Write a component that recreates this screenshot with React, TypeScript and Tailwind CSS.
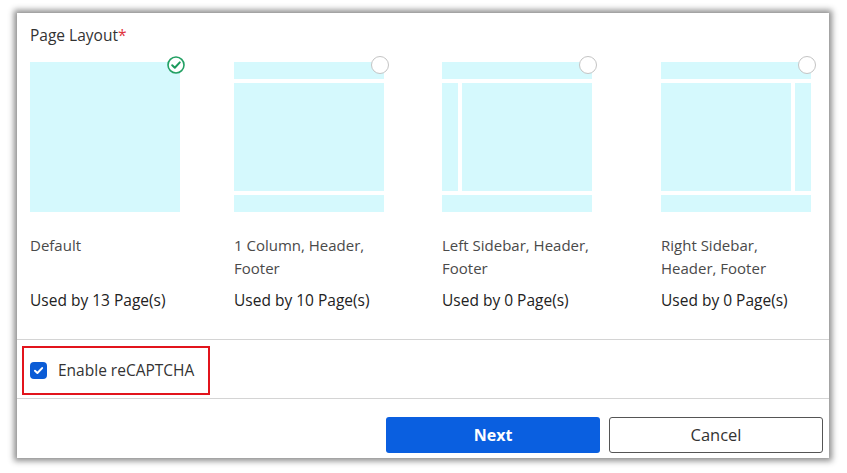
import React from "react";

type Layout = {
  name: string;
  kind: "default" | "column" | "left" | "right";
  used: number;
  selected?: boolean;
};

const layouts: Layout[] = [
  { name: "Default", kind: "default", used: 13, selected: true },
  { name: "1 Column, Header, Footer", kind: "column", used: 10 },
  { name: "Left Sidebar, Header, Footer", kind: "left", used: 0 },
  { name: "Right Sidebar, Header, Footer", kind: "right", used: 0 },
];

const Thumb = ({ kind }: { kind: Layout["kind"] }) => {
  if (kind === "default") {
    return <div className="w-[150px] h-[150px] bg-[#d5f9fd]" />;
  }
  return (
    <div className="w-[150px] h-[150px] flex flex-col gap-[4px]">
      <div className="h-[17px] bg-[#d5f9fd]" />
      <div className="flex-1 flex gap-[4px]">
        {kind === "left" && <div className="w-[16px] bg-[#d5f9fd]" />}
        <div className="flex-1 bg-[#d5f9fd]" />
        {kind === "right" && <div className="w-[16px] bg-[#d5f9fd]" />}
      </div>
      <div className="h-[17px] bg-[#d5f9fd]" />
    </div>
  );
};

const Radio = ({ selected }: { selected?: boolean }) => {
  if (selected) {
    return (
      <svg width="18" height="18" viewBox="0 0 18 18" className="absolute -top-[6px] -right-[5px]">
        <circle cx="9" cy="9" r="8" fill="white" stroke="#22a063" strokeWidth="1.6" />
        <path d="M5.2 9.2 L7.8 11.7 L12.8 6.4" fill="none" stroke="#1b9a5c" strokeWidth="2" strokeLinecap="round" strokeLinejoin="round" />
      </svg>
    );
  }
  return (
    <div className="absolute -top-[6px] -right-[5px] w-[18px] h-[18px] rounded-full bg-white border-[1.5px] border-[#c4c4c4]" />
  );
};

export default function App() {
  return (
    <div className="w-[847px] h-[473px] bg-white pt-[13px] pl-[17px] font-['Open_Sans',sans-serif]">
      <div className="w-[812px] h-[445px] bg-white shadow-[0_0_6px_3px_rgba(0,0,0,0.45)] flex flex-col">
        <div className="pl-[13px] pt-[12px] pb-[27px]">
          <h2 className="text-[15.5px] leading-[20px] text-[#333333]">
            Page Layout<span className="text-[#e0333d]">*</span>
          </h2>
          <div className="mt-[17px] grid grid-cols-[204px_208px_219px_150px]">
            {layouts.map((l) => (
              <div key={l.name} className="w-[150px]">
                <div className="relative">
                  <Thumb kind={l.kind} />
                  <Radio selected={l.selected} />
                </div>
                <p className="mt-[22px] h-[46px] text-[15px] leading-[23px] text-[#4a4a4a]">
                  {l.name}
                </p>
                <p className="mt-[9px] text-[15.5px] leading-[23px] text-[#222222] font-medium whitespace-nowrap">
                  Used by {l.used} Page(s)
                </p>
              </div>
            ))}
          </div>
        </div>

        <div className="border-t border-[#d4d4d4] h-[59px] pl-[5px] pt-[6px]">
          <div className="w-[188px] h-[49px] border-2 border-[#e2141c] flex items-center pl-[6px] gap-[11px]">
            <span className="w-[17px] h-[17px] rounded-[4px] bg-[#0b5cd6] flex items-center justify-center">
              <svg width="11" height="11" viewBox="0 0 10 10">
                <path d="M1.8 5.2 L4 7.3 L8.3 2.8" fill="none" stroke="white" strokeWidth="1.8" strokeLinecap="round" strokeLinejoin="round" />
              </svg>
            </span>
            <span className="text-[15.5px] text-[#333333]">Enable reCAPTCHA</span>
          </div>
        </div>

        <div className="border-t border-[#d4d4d4] flex-1 flex justify-end items-start pt-[18px] pr-[6px] gap-[9px]">
          <button className="w-[214px] h-[36px] rounded-[3px] bg-[#0a5fe0] text-white text-[16px] font-bold">
            Next
          </button>
          <button className="w-[214px] h-[36px] rounded-[3px] border border-[#555555] bg-white text-[#333333] text-[16.5px]">
            Cancel
          </button>
        </div>
      </div>
    </div>
  );
}
